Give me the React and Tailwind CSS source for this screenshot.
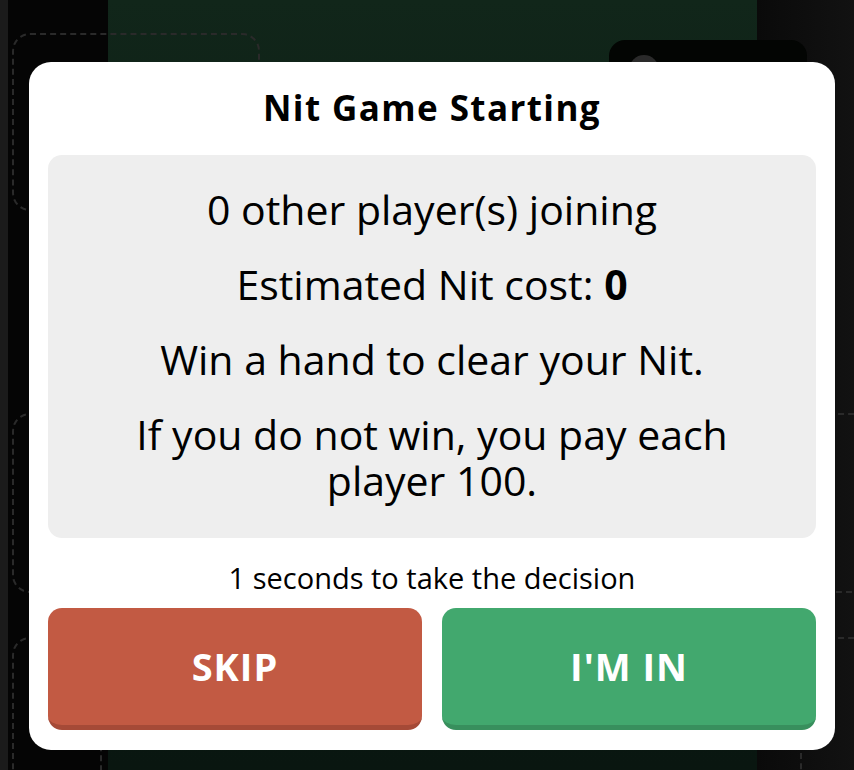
const font = { fontFamily: "'Open Sans', 'Noto Sans', sans-serif" };

const SeatSlot = ({ className }) => (
  <div className={`rounded-[18px] border-2 border-dashed border-[#2a2a2a] ${className}`} />
);

const TableBackdrop = () => (
  <div className="flex h-[770px] w-[854px] overflow-hidden bg-black">
    <div className="w-[8px] bg-[#1b1b1b]" />
    <div className="w-[100px] bg-[#050505]" />
    <div className="w-[649px] bg-gradient-to-b from-[#11261a] via-[#0b1a12] to-[#091610]" />
    <div className="flex-1 bg-gradient-to-r from-[#0a0a0a] to-[#121212]" />
  </div>
);

const Modal = () => (
  <div
    className="flex w-[806px] flex-col items-center rounded-[22px] bg-white px-[19px] pb-[20px] pt-[22px] text-black"
    style={font}
  >
    <h2 className="text-[35px] font-bold leading-[48px] tracking-[1.4px]">Nit Game Starting</h2>
    <div className="mt-[23px] flex w-full flex-col items-center gap-[29px] rounded-[14px] bg-[#eeeeee] px-[40px] pb-[35px] pt-[31px] text-center text-[41px] leading-[46px]">
      <p>0 other player(s) joining</p>
      <p>
        Estimated Nit cost: <span className="font-bold">0</span>
      </p>
      <p>Win a hand to clear your Nit.</p>
      <p className="px-[40px]">If you do not win, you pay each player 100.</p>
    </div>
    <p className="mt-[24px] text-[29px] leading-[32px]">1 seconds to take the decision</p>
    <div className="mt-[14px] grid w-full grid-cols-2 gap-[20px]">
      <button className="h-[122px] rounded-[14px] border-b-[5px] border-[#a54a37] bg-[#c25a43] text-[38px] font-bold tracking-[1px] text-white">
        SKIP
      </button>
      <button className="h-[122px] rounded-[14px] border-b-[5px] border-[#388f5d] bg-[#42a86e] text-[38px] font-bold tracking-[1px] text-white">
        I'M IN
      </button>
    </div>
  </div>
);

export default function App() {
  return (
    <div className="relative h-[770px] w-[854px] overflow-hidden">
      <TableBackdrop />
      {/* seat placeholders around the table */}
      <SeatSlot className="absolute left-[12px] top-[33px] h-[178px] w-[248px]" />
      <SeatSlot className="absolute left-[12px] top-[413px] h-[180px] w-[90px]" />
      <SeatSlot className="absolute left-[12px] top-[637px] h-[180px] w-[90px]" />
      <SeatSlot className="absolute left-[800px] top-[413px] h-[180px] w-[90px]" />
      <SeatSlot className="absolute left-[800px] top-[637px] h-[180px] w-[90px]" />
      <div className="absolute left-[609px] top-[40px] h-[120px] w-[198px] rounded-[16px] bg-[#030503]">
        <div className="ml-[20px] mt-[15px] h-[30px] w-[30px] rounded-full bg-[#2a2a2a]" />
      </div>
      <div className="absolute left-[29px] top-[62px]">
        <Modal />
      </div>
    </div>
  );
}
